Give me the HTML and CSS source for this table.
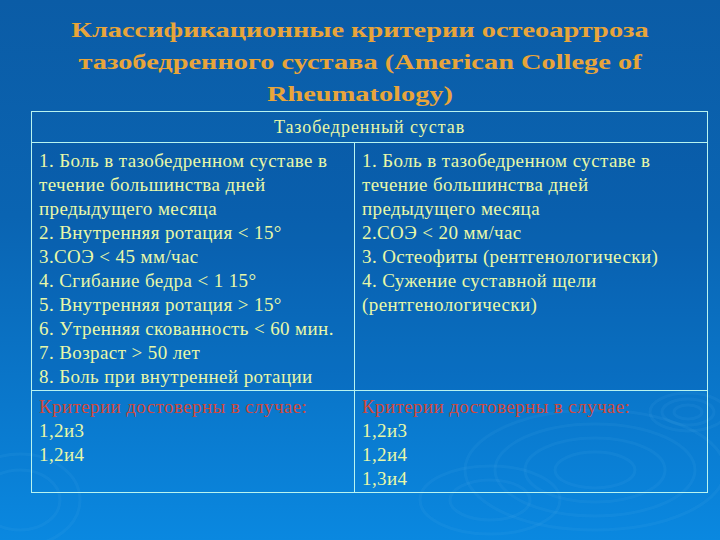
FILE: index.html
```html
<!DOCTYPE html>
<html lang="ru">
<head>
<meta charset="utf-8">
<link rel="stylesheet" href="styles.css">
</head>
<body>
<div class="slide">
  <svg class="ripples" width="720" height="540" viewBox="0 0 720 540">
    <g fill="none" stroke="#5ab4f0" stroke-opacity="0.1" stroke-width="3">
      <ellipse cx="595" cy="470" rx="40" ry="18"/>
      <ellipse cx="595" cy="470" rx="70" ry="32"/>
      <ellipse cx="595" cy="470" rx="100" ry="46"/>
      <ellipse cx="595" cy="470" rx="130" ry="60"/>
      <ellipse cx="688" cy="412" rx="14" ry="7"/>
      <ellipse cx="688" cy="412" rx="26" ry="13"/>
      <ellipse cx="688" cy="412" rx="38" ry="19"/>
      <ellipse cx="490" cy="500" rx="40" ry="20"/>
      <ellipse cx="490" cy="500" rx="70" ry="34"/>
      <ellipse cx="20" cy="500" rx="40" ry="30"/>
      <ellipse cx="20" cy="500" rx="60" ry="46"/>
    </g>
  </svg>
  <h1 class="title">Классификационные критерии остеоартроза<br>тазобедренного сустава (American College of<br>Rheumatology)</h1>
  <div class="table">
    <div class="head">Тазобедренный сустав</div>
    <div class="row crit">
      <div class="cell">1. Боль в тазобедренном суставе в<br>течение большинства дней<br>предыдущего месяца<br>2. Внутренняя ротация &lt; 15°<br>3.СОЭ &lt; 45 мм/час<br>4. Сгибание бедра &lt; 1 15°<br>5. Внутренняя ротация &gt; 15°<br>6. Утренняя скованность &lt; 60 мин.<br>7. Возраст &gt; 50 лет<br>8. Боль при внутренней ротации</div>
      <div class="cell">1. Боль в тазобедренном суставе в<br>течение большинства дней<br>предыдущего месяца<br>2.СОЭ &lt; 20 мм/час<br>3. Остеофиты (рентгенологически)<br>4. Сужение суставной щели<br>(рентгенологически)</div>
    </div>
    <div class="row res">
      <div class="cell"><span class="red">Критерии достоверны в случае:</span><br>1,2и3<br>1,2и4</div>
      <div class="cell"><span class="red">Критерии достоверны в случае:</span><br>1,2и3<br>1,2и4<br>1,3и4</div>
    </div>
  </div>
</div>
</body>
</html>
```
FILE: styles.css
```css
html, body {
  margin: 0;
  padding: 0;
}
body {
  width: 720px;
  height: 540px;
  overflow: hidden;
  font-family: "Liberation Serif", serif;
}
.slide {
  position: relative;
  width: 720px;
  height: 540px;
  background: linear-gradient(180deg, #0b5ca6 0%, #0a64b2 40%, #0a78cc 75%, #0a88e0 100%);
  overflow: hidden;
}
.ripples {
  position: absolute;
  left: 0;
  top: 0;
}
.title {
  position: relative;
  margin: 0;
  padding-top: 14px;
  text-align: center;
  color: #e8a53a;
  font-family: "Liberation Serif", serif;
  font-size: 22px;
  line-height: 32px;
  font-weight: bold;
  height: 97px;
  transform: scaleX(1.29);
  transform-origin: center top;
}
.table {
  position: relative;
  margin-left: 31px;
  width: 675px;
  border: 1.5px solid #b8f4f0;
  color: #e8f8a8;
  font-family: "Liberation Serif", serif;
  font-size: 19px;
  letter-spacing: 0.4px;
}
.head {
  height: 30px;
  line-height: 30px;
  text-align: center;
  font-size: 18px;
  letter-spacing: 0.95px;
  border-bottom: 1.5px solid #b8f4f0;
}
.row {
  display: grid;
  grid-template-columns: 323px 1fr;
}
.row.crit {
  height: 247px;
  border-bottom: 1.5px solid #b8f4f0;
  background: rgba(0, 40, 120, 0.08);
}
.row.res {
  height: 101px;
}
.cell {
  line-height: 24px;
  padding-left: 7px;
  white-space: nowrap;
}
.crit .cell {
  padding-top: 6px;
}
.res .cell {
  padding-top: 4px;
}
.row .cell:first-child {
  border-right: 1.5px solid #b8f4f0;
}
.red {
  color: #d2483a;
}
```
